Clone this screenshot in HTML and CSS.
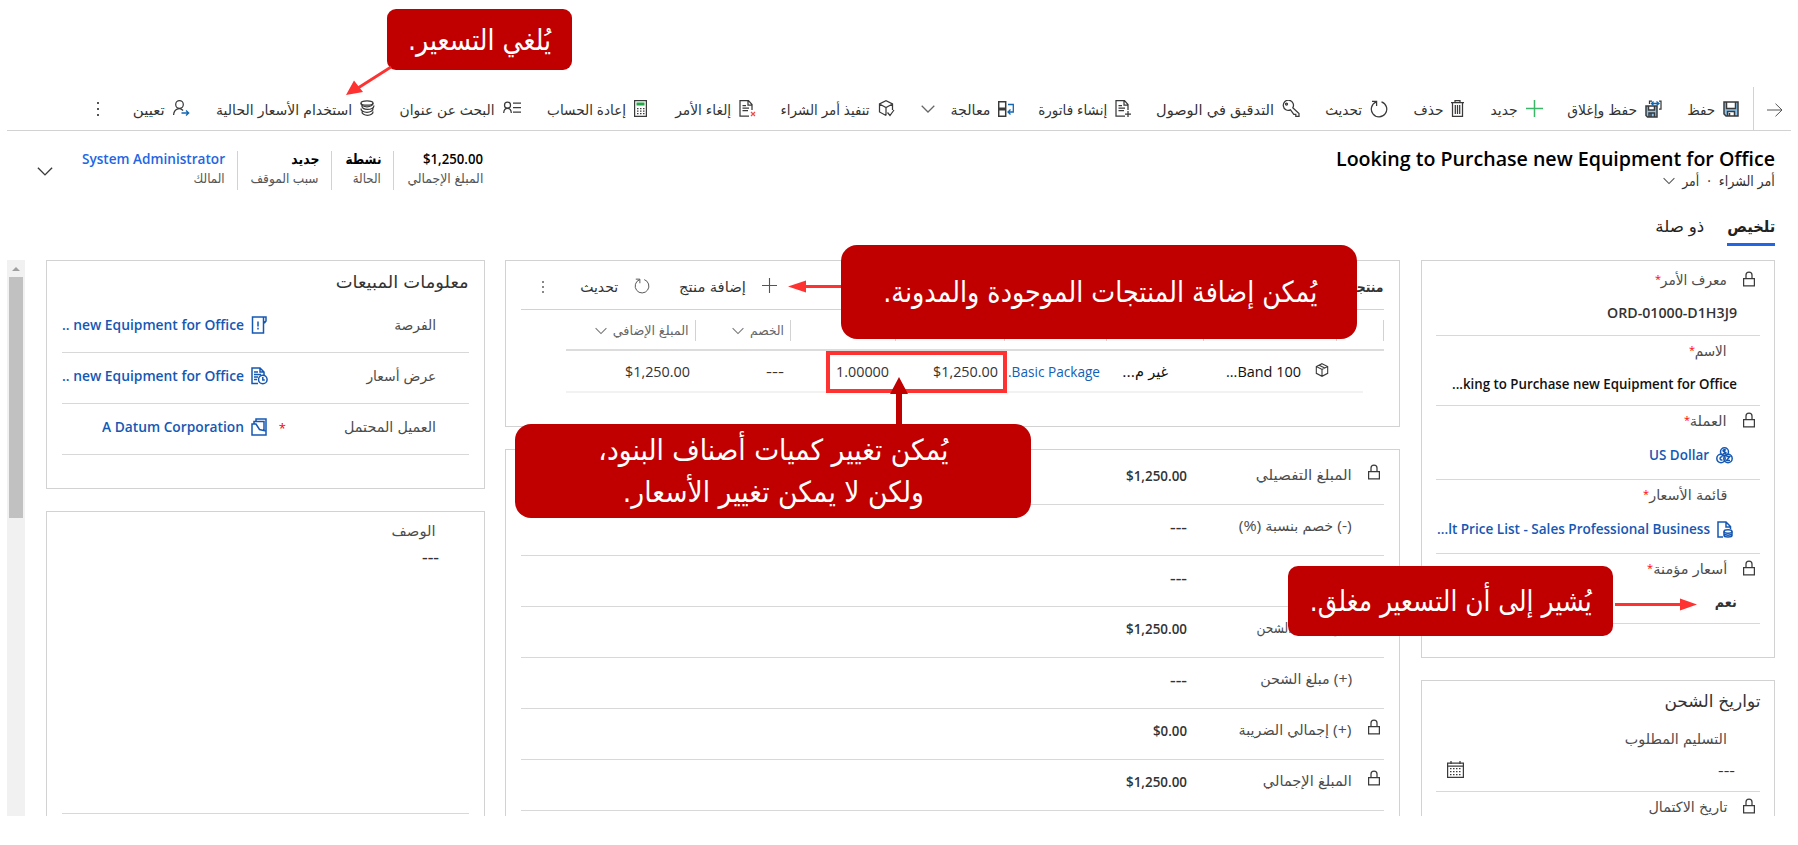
FILE: index.html
```html
<!DOCTYPE html>
<html lang="ar" dir="rtl">
<head>
<meta charset="utf-8">
<title>أمر الشراء</title>
<link rel="stylesheet" href="styles.css">
</head>
<body>
<svg class="defs" width="0" height="0">
  <symbol id="lock" viewBox="0 0 12 16"><path d="M.6 7.500h10.800v7.400H.6zM3 7.500V4a3 3 0 0 1 6 0v3.500"/></symbol>
  <symbol id="chev" viewBox="0 0 14 8"><path d="M.7.7 7 7 13.300.7"/></symbol>
  <symbol id="refresh" viewBox="0 0 18 18"><path d="M11.500 1.800A7.700 7.700 0 1 1 6.300 1.900M2 1.300h4.600v4.600"/></symbol>
  <symbol id="cube" viewBox="0 0 16 16"><path d="M8 .8 14.500 4v7.800L8 15.200l-6.500-3.400V4zM1.500 4 8 7.300 14.500 4M8 7.300v7.900M4.700 2.500l6.500 3.300"/></symbol>
</svg>
<div class="page">
  <nav class="toolbar">
    <div class="back"><svg width="16" height="14" viewBox="0 0 16 14"><path d="M0 7h15M8.500.7 15 7l-6.500 6.300"/></svg></div>
    <div class="cmds">
      <div class="cmd"><svg width="16" height="16" viewBox="0 0 16 16"><path class="sky" d="M1 1h14v14H3l-2-2z"/><path class="white" d="M3.500 1h9v6h-9zM4.500 10.500h7V15h-7z"/><path class="bold" d="M1 1h14v14H3l-2-2zM3.500 1v6.500h9V1M4.500 15v-4.500h7V15M6.500 12v3"/></svg><span class="fit" data-w="28">حفظ</span></div>
      <div class="cmd"><svg width="17" height="18" viewBox="0 0 17 18"><path class="sky" d="M1 6h11v11H2.500L1 15.500z"/><path class="white" d="M3.500 6h6v4h-6z"/><path class="bold" d="M1 6h11v11H2.500L1 15.500zM3.500 6v4h6V6M4 17v-4h5.500v4M6 13v4"/><path d="M4.500 4V1H7M14 1h2v8h-2"/><path class="blue" d="M6.500 3.500h7M11.500 1.500l2.500 2-2.500 2M8.500 1.500l-2 2 2 2"/></svg><span class="fit" data-w="70">حفظ وإغلاق</span></div>
      <div class="cmd"><svg width="17" height="17" viewBox="0 0 17 17"><path class="green" d="M8.500 0v17M0 8.500h17"/></svg><span class="fit" data-w="27">جديد</span></div>
      <div class="cmd"><svg width="13" height="17" viewBox="0 0 13 17"><path d="M0 2.600h13M4 2.600V.6h5v2M1.500 2.600v13.800h10V2.600M4.300 5v9M6.500 5v9M8.700 5v9"/></svg><span class="fit" data-w="30">حذف</span></div>
      <div class="cmd"><svg width="18" height="18"><use href="#refresh"/></svg><span class="fit" data-w="37">تحديث</span></div>
      <div class="cmd"><svg width="18" height="17" viewBox="0 0 18 17"><path d="M10.800 7.800 17 13.500v2.800h-3.200v-2h-2l-3.300-4.400A5.100 5.100 0 1 1 10.800 7.800z"/><circle cx="4.500" cy="4" r="1"/></svg><span class="fit" data-w="118">التدقيق في الوصول</span></div>
      <div class="cmd"><svg width="17" height="17" viewBox="0 0 17 17"><path d="M10 16H1V.7h8.500L13 4.500V10M9 .7V5h4M3.500 5.500H7M3.500 8h6.500M3.500 10.500H9M13 11v6M10 14h6"/></svg><span class="fit" data-w="69">إنشاء فاتورة</span></div>
      <div class="cmd"><svg width="16" height="16" viewBox="0 0 16 16"><path class="bold" d="M.7.7h7v6.600h-7zM.7 8.700h7v6.600h-7z"/><path class="blue" d="M10 3.500h5.300v7.500H10M12.500 8.500 10 11l2.500 2.500"/></svg><span class="fit" data-w="40">معالجة</span><svg class="drop" width="14" height="8"><use href="#chev"/></svg></div>
      <div class="cmd"><svg width="17" height="17" viewBox="0 0 17 17"><path d="M8 15.500 1.500 12V4L8 .8 14.500 4v6M1.500 4 8 7.500 14.500 4M8 7.500v8M9.500 12.500l2.500 3 4-5.500"/></svg><span class="fit" data-w="89">تنفيذ أمر الشراء</span></div>
      <div class="cmd"><svg width="17" height="17" viewBox="0 0 17 17"><path d="M10 16H1V.7h8.500L13 4.500V10M9 .7V5h4M3.500 5.500H7M3.500 8h6.500M3.500 10.500H9"/><path class="redline" d="m12 12 4 4m0-4-4 4"/></svg><span class="fit" data-w="56">إلغاء الأمر</span></div>
      <div class="cmd"><svg width="13" height="17" viewBox="0 0 13 17"><path d="M.6.6h11.800v15.800H.6z"/><path class="gfill" d="M2.500 2.500h8v3h-8z"/><path class="dots" d="M3 8.500h8M3 11h8M3 13.500h8"/></svg><span class="fit" data-w="79">إعادة الحساب</span></div>
      <div class="cmd"><svg class="person" width="18" height="14" viewBox="0 0 18 14"><circle cx="4.500" cy="4.200" r="3"/><path d="M.7 12c.3-6.200 7.300-6.200 7.600 0M10 2h8M10 6.500h8M10 11h8"/></svg><span class="fit" data-w="95">البحث عن عنوان</span></div>
      <div class="cmd wide"><svg width="15" height="17" viewBox="0 0 15 17"><ellipse cx="7" cy="3" rx="6" ry="2.200"/><path d="M1 3c-.5 5 12.500 5 12 0M2 5.500c-1.500 5 12 5.500 12 0M1 8.500c-.5 5 12.500 5 12 0M2 11.500c-.5 5 11.500 5 11 0"/></svg><span class="fit" data-w="136">استخدام الأسعار الحالية</span></div>
      <div class="cmd"><svg width="17" height="17" viewBox="0 0 17 17"><circle cx="6.500" cy="4.500" r="3.800"/><path d="M.6 15c.3-6 6-8 9.500-4.500"/><path class="blue" d="M8.500 13h7M13 10.500l2.700 2.500-2.700 2.500"/></svg><span class="fit" data-w="32">تعيين</span></div>
      <div class="more"><i></i><i></i><i></i></div>
    </div>
  </nav>

  <header class="head">
    <div class="ident">
      <h1 class="fit" data-w="439" dir="ltr">Looking to Purchase new Equipment for Office</h1>
      <div class="sub"><span class="fit" data-w="56">أمر الشراء</span><b>·</b><span class="fit" data-w="17">أمر</span><svg width="12" height="8"><use href="#chev"/></svg></div>
      <div class="tabs"><span class="tab on"><span class="fit" data-w="48">تلخيص</span></span><span class="tab"><span class="fit" data-w="49">ذو صلة</span></span></div>
    </div>
    <div class="stats">
      <div class="stat s1"><span class="fit strong" data-w="60" dir="ltr">$1,250.00</span><span class="fit cap" data-w="76">المبلغ الإجمالي</span></div>
      <div class="stat s2"><span class="fit strong" data-w="36">نشطة</span><span class="fit cap" data-w="28">الحالة</span></div>
      <div class="stat s3"><span class="fit strong" data-w="28">جديد</span><span class="fit cap" data-w="68">سبب الموقف</span></div>
      <div class="stat s4"><span class="fit owner" data-w="143" dir="ltr">System Administrator</span><span class="fit cap" data-w="31">المالك</span></div>
      <svg class="expand" width="16" height="9"><use href="#chev"/></svg>
    </div>
  </header>

  <main class="form">
    <div class="col right">
      <section class="card info">
        <div class="field f1"><div class="lab"><svg class="lock" width="12" height="16"><use href="#lock"/></svg><span class="fit" data-w="66">معرف الأمر</span><em>*</em></div><div class="val"><span class="fit semi" data-w="130" dir="ltr">ORD-01000-D1H3J9</span></div></div>
        <div class="field f2"><div class="lab"><span class="fit" data-w="32">الاسم</span><em>*</em></div><div class="val"><span class="fit semi dark" data-w="285" dir="ltr">...king to Purchase new Equipment for Office</span></div></div>
        <div class="field f3"><div class="lab"><svg class="lock" width="12" height="16"><use href="#lock"/></svg><span class="fit" data-w="37">العملة</span><em>*</em></div><div class="val link"><svg width="17" height="17" viewBox="0 0 17 17"><circle cx="8.500" cy="4.800" r="4"/><circle cx="5" cy="11.500" r="4.200"/><circle cx="12" cy="11.500" r="4.200"/><path d="M10 3.300c-1-1-3-.7-3 .4 0 1.400 3 .7 3 2.100 0 1.200-2.200 1.200-3 .4M8.500 2v5.600M6.500 9.800c-3-.8-3.500 3.800 0 3.200M10.300 9.500h3.500L10.500 13.500H14"/></svg><span class="fit" data-w="60" dir="ltr">US Dollar</span></div></div>
        <div class="field f4"><div class="lab"><span class="fit" data-w="78">قائمة الأسعار</span><em>*</em></div><div class="val link"><svg width="16" height="17" viewBox="0 0 16 17"><path d="M6 16H1V1h8l4.500 4.500V8M9 1v5h4.500"/><ellipse cx="11" cy="10.500" rx="4" ry="1.700"/><path d="M7 10.500v4c0 2 8 2 8 0v-4M7 13c1 1.500 7 1.500 8 0"/></svg><span class="fit" data-w="273" dir="ltr">...lt Price List - Sales Professional Business</span></div></div>
        <div class="field f5"><div class="lab"><svg class="lock" width="12" height="16"><use href="#lock"/></svg><span class="fit" data-w="74">أسعار مؤمنة</span><em>*</em></div><div class="val"><span class="fit semi" data-w="22">نعم</span></div></div>
      </section>
      <section class="card dates">
        <h2><span class="fit" data-w="96">تواريخ الشحن</span></h2>
        <div class="field d1"><div class="lab"><span class="fit" data-w="102">التسليم المطلوب</span></div><div class="val"><span class="fit" data-w="17" dir="ltr">---</span><svg class="cal" width="17" height="17" viewBox="0 0 17 17"><path d="M.6 2h15.800v14.400H.6zM.6 5h15.800M4 0v3M13 0v3"/><path class="dots" d="M3 7.500h11M3 10.500h11M3 13.500h11"/></svg></div></div>
        <div class="field"><div class="lab"><svg class="lock" width="12" height="16"><use href="#lock"/></svg><span class="fit" data-w="79">تاريخ الاكتمال</span></div></div>
      </section>
    </div>

    <div class="col mid">
      <section class="card grid">
        <div class="gbar"><span class="fit semi gt" data-w="44">منتجات</span><div class="gact"><svg width="15" height="15" viewBox="0 0 15 15"><path d="M7.500 0v15M0 7.500h15"/></svg><span class="fit" data-w="67">إضافة منتج</span><svg class="r" width="16" height="16" viewBox="0 0 16 16"><use href="#refresh" width="16" height="16"/></svg><span class="fit" data-w="38">تحديث</span><div class="more"><i></i><i></i><i></i></div></div></div>
        <div class="ghead"><div class="c0"></div><div class="c1"></div><div class="c2"></div><div class="c3"></div><div class="c4"></div><div class="c5"></div><div class="c6"><span class="fit" data-w="34">الخصم</span><svg width="12" height="8"><use href="#chev"/></svg></div><div class="c7"><span class="fit" data-w="76">المبلغ الإضافي</span><svg width="12" height="8"><use href="#chev"/></svg></div></div>
        <div class="grow"><div class="r0"><svg width="14" height="14"><use href="#cube"/></svg></div><div class="r1"><span class="fit dark" data-w="75" dir="ltr">...Band 100</span></div><div class="r2"><span class="fit dark" data-w="46">غير م...</span></div><div class="r3"><span class="fit blue-t" data-w="92" dir="ltr">.Basic Package</span></div><div class="r4"><span class="fit" data-w="65" dir="ltr">$1,250.00</span></div><div class="r5"><span class="fit" data-w="53" dir="ltr">1.00000</span></div><div class="r6"><span class="fit" data-w="18" dir="ltr">---</span></div><div class="r7"><span class="fit" data-w="65" dir="ltr">$1,250.00</span></div></div>
      </section>
      <section class="card totals">
        <div class="row first"><div class="lk"><svg class="lock" width="12" height="16"><use href="#lock"/></svg></div><div class="rl"><span class="fit" data-w="96">المبلغ التفصيلي</span></div><span class="fit semi" data-w="61" dir="ltr">$1,250.00</span></div>
        <div class="row"><div class="lk"></div><div class="rl"><span class="fit" data-w="113">(-) خصم بنسبة (%)</span></div><span class="fit semi" data-w="17" dir="ltr">---</span></div>
        <div class="row"><div class="lk"></div><div class="rl"></div><span class="fit semi" data-w="17" dir="ltr">---</span></div>
        <div class="row"><div class="lk"></div><div class="rl"><span class="fit" data-w="95">مبلغ ما قبل الشحن</span></div><span class="fit semi" data-w="61" dir="ltr">$1,250.00</span></div>
        <div class="row"><div class="lk"></div><div class="rl"><span class="fit" data-w="92">(+) مبلغ الشحن</span></div><span class="fit semi" data-w="17" dir="ltr">---</span></div>
        <div class="row"><div class="lk"><svg class="lock" width="12" height="16"><use href="#lock"/></svg></div><div class="rl"><span class="fit" data-w="113">(+) إجمالي الضريبة</span></div><span class="fit semi" data-w="34" dir="ltr">$0.00</span></div>
        <div class="row"><div class="lk"><svg class="lock" width="12" height="16"><use href="#lock"/></svg></div><div class="rl"><span class="fit" data-w="89">المبلغ الإجمالي</span></div><span class="fit semi" data-w="61" dir="ltr">$1,250.00</span></div>
      </section>
    </div>

    <div class="col left">
      <section class="card sales">
        <h2><span class="fit" data-w="133">معلومات المبيعات</span></h2>
        <div class="srow"><div class="sl"><span class="fit" data-w="42">الفرصة</span></div><div class="link"><svg width="17" height="18" viewBox="0 0 17 18"><path d="M1.500 1h11v16h-11zM12.500 1H15v4l-1.200 1.500L12.500 5M7 5.500v5M7 11.800v1.700"/></svg><span class="fit" data-w="182" dir="ltr">.. new Equipment for Office</span></div></div>
        <div class="srow"><div class="sl"><span class="fit" data-w="70">عرض أسعار</span></div><div class="link"><svg width="17" height="18" viewBox="0 0 17 18"><path d="M7 16.500H1V1h8l4 4v3M9 1v4h4M3 5h4M3 7.500h7M3 10h4M3 12.500h3"/><circle cx="11.800" cy="12.500" r="4.300"/><path d="M11.800 10v3h2"/></svg><span class="fit" data-w="182" dir="ltr">.. new Equipment for Office</span></div></div>
        <div class="srow"><div class="sl"><span class="fit" data-w="92">العميل المحتمل</span></div><em>*</em><div class="link"><svg width="17" height="18" viewBox="0 0 17 18"><path d="M1 6h4l3.500 5.500L15 13v4H1zM3 6V3.500h10v9M5 3.500V1h10v12"/></svg><span class="fit" data-w="142" dir="ltr">A Datum Corporation</span></div></div>
      </section>
      <section class="card desc"><div class="dl"><span class="fit" data-w="44">الوصف</span></div><div class="dv"><span class="fit semi" data-w="17" dir="ltr">---</span></div><hr></section>
    </div>
    <div class="scroll"><div class="up"></div><div class="thumb"></div></div>
  </main>

  <div class="box"></div>
  <div class="note n1"><span class="fit" data-w="143">يُلغي التسعير.</span></div>
  <div class="note n2"><span class="fit" data-w="434">يُمكن إضافة المنتجات الموجودة والمدونة.</span></div>
  <div class="note n3"><span class="fit" data-w="350">يُمكن تغيير كميات أصناف البنود،</span><span class="fit" data-w="301">ولكن لا يمكن تغيير الأسعار.</span></div>
  <div class="note n4"><span class="fit" data-w="282">يُشير إلى أن التسعير مغلق.</span></div>
  <svg class="arrows" width="1798" height="845"><g class="bright"><path d="M391 67 358 88M841 286.500H803M1615 604.500H1680"/><path class="tip" d="M346 95 354 80.500 363 92zM788 286.500l18-6v12zM1697 604.500l-17-6v12z"/></g><path class="deep" d="M896 424v-30h-6l9-17 9 17h-6v30z"/></svg>
</div>
<script src="fit.js"></script>
</body>
</html>
```
FILE: styles.css
```css
* { box-sizing: border-box; }
body { margin: 0; background: #fff; color: #333; font: 14px/20px "Open Sans", "DejaVu Sans Condensed", "DejaVu Sans", sans-serif; }
.defs { position: absolute; }
.page { position: relative; width: 1798px; height: 845px; overflow: hidden; padding-top: 87px; }
svg { fill: none; stroke: #3a3a3a; stroke-width: 1.25; flex: none; display: block; }
.fit { display: block; white-space: nowrap; flex: none; }
.fit > span { display: inline-block; transform-origin: right center; }
.fit[dir="ltr"] > span { transform-origin: left center; }
h1, h2 { margin: 0; font-weight: 400; }
em { color: #f00; font-style: normal; line-height: 12px; font-size: 11px; }
.semi { font-weight: 600; color: #333; }
.dark { color: #111; }
.blue-t { color: #1160b7; }
.sky { fill: #8cc4ee; stroke: none; }
.white { fill: #fff; stroke: none; }
.bold { stroke-width: 1.5; }
.blue { stroke: #1267b4; stroke-width: 1.300; }
.green { stroke: #3cb76a; stroke-width: 1.500; }
.gfill { fill: #22a447; stroke: none; }
.redline { stroke: #f04a4a; }
.dots { stroke-dasharray: 1.500 1.500; }

.toolbar { display: flex; height: 44px; margin: 0 7px; border-bottom: 1px solid #d2d2d2; }
.back { width: 38px; border-left: 1px solid #d2d2d2; display: flex; align-items: center; padding: 2px 8px 0 0; }
.back svg { stroke-width: 1; stroke: #555; }
.cmds { flex: 1; display: grid; padding: 0 14px 0 0; align-items: center; grid-template-columns: 77px 119px 79px 76px 88px 168px 118px 119px 139px 109px 126px 146px 185px 91px 10px; }
.cmd { display: flex; align-items: center; gap: 8px; }
.cmd > .fit { padding-top: 2px; }
.person { margin-top: -2px; }
.drop { margin-right: 7px; stroke: #666; }
.more { display: flex; flex-direction: column; gap: 4px; width: 2px; }
.more i { width: 2px; height: 2px; background: #555; }

.head { height: 129px; display: flex; justify-content: space-between; padding: 16px 23px 0 37px; }
.ident { display: flex; flex-direction: column; align-items: flex-start; }
h1 { font-size: 20px; font-weight: 600; line-height: 24px; color: #000; }
.sub { display: flex; align-items: center; height: 20px; gap: 8px; }
.sub svg { margin-right: -1px; stroke: #555; }
.sub b { font-weight: 400; width: 4px; }
.tabs { display: flex; gap: 23px; margin-top: 26px; }
.tab { font-size: 16px; height: 33px; padding-top: 1px; line-height: 24px; color: #222; margin-top: -4px; }
.on { border-bottom: 3px solid #2266e3; font-weight: 600; }
.stats { display: flex; padding-top: 4px; }
.stat { display: flex; flex-direction: column; align-items: flex-start; height: 39px; }
.stat .fit { line-height: 19px; }
.stat .fit:first-child { margin-top: -2px; }
.stat + .stat { border-right: 1px solid #d2d2d2; padding-right: 12px; }
.s1 { width: 89px; }
.s2 { width: 62px; }
.s3 { width: 94px; }
.s4 { width: 185px; }
.strong { font-weight: 600; color: #000; font-size: 14px; }
.cap { font-size: 13px; color: #555; margin-top: 1px; }
.owner { color: #2266e3; font-weight: 600; }
.expand { margin-top: 16px; }

.form { height: 556px; overflow: hidden; display: flex; padding: 0 23px 0 7px; }
.col { flex: none; }
.right { width: 354px; margin-left: 21px; }
.mid { width: 895px; margin-left: 20px; }
.left { width: 439px; margin-left: 21px; }
.scroll { width: 18px; background: #f1f1f1; padding: 7px 2px 0; }
.up { border: 4px solid transparent; border-top: 0; border-bottom: 4px solid #a0a0a0; width: 8px; margin: 0 auto 6px; }
.thumb { height: 241px; background: #c1c1c1; }
.card { border: 1px solid #d2d2d2; padding: 0 14px; }
.info { height: 398px; }
.dates { height: 200px; margin-top: 22px; }
.field { border-bottom: 1px solid #d8d8d8; }
.lab { display: flex; height: 29px; align-items: center; position: relative; padding-right: 33px; color: #4c4c4c; }
.lab .lock { position: absolute; right: 5px; top: 6px; }
.lab em { margin: -2px 0 0 0; }
.val { display: flex; height: 30px; align-items: center; margin-top: 4px; padding-right: 23px; }
.link { color: #1558b4; font-weight: 600; display: flex; align-items: center; gap: 7px; }
.link svg { stroke: #1558b4; stroke-width: 1.500; }
.val.link { padding-right: 27px; margin-top: 5px; }
.f1 { height: 75px; padding-top: 4px; }
.f2 { height: 70px; }
.f3, .f4 { height: 74px; }
.f5 { height: 70px; }
h2 { font-size: 17px; line-height: 24px; color: #333; }
.dates h2 { padding-top: 8px; height: 43px; }
.d1 { height: 68px; }
.d1 .val { padding-right: 25px; margin-top: 3px; }
.cal { margin: -4px auto 0 11px; }

.grid { height: 167px; padding: 0 15px; }
.gbar { height: 49px; border-bottom: 1px solid #d2d2d2; display: flex; align-items: center; justify-content: space-between; padding-top: 3px; }
.gact { display: flex; align-items: center; padding-left: 21px; gap: 16px; }
.gact svg { margin-top: -2px; stroke: #555; stroke-width: 1.100; }
.gact .more { margin-right: 20px; gap: 3px; }
.gact .more i { background: #888; }
.gact .r { margin-right: 13px; width: 16px; }
.ghead { display: grid; grid-template-columns: 47px 133px 97px 102px 109px 105px 95px 130px; height: 41px; border-bottom: 2px solid #dcdcdc; margin-left: 45px; padding-top: 10px; font-size: 12.500px; color: #666; }
.ghead div { border-right: 1px solid #d2d2d2; height: 21px; display: flex; align-items: center; gap: 6px; padding-right: 6px; }
.ghead svg { stroke: #777; }
.grow { display: grid; grid-template-columns: 62px 133px 68px 102px 109px 105px 94px 124px; height: 42px; border-bottom: 2px solid #f2f2f2; margin: 0 21px 0 45px; align-items: center; font-size: 14.500px; }
.grow .fit { padding-top: 2px; }
.r0 { padding-right: 34px; margin-top: -2px; }
.totals { height: 500px; margin-top: 22px; padding: 0 15px; }
.row { height: 51px; border-bottom: 1px solid #d8d8d8; display: flex; align-items: center; padding-bottom: 9px; }
.first { height: 55px; padding-bottom: 4px; }
.row .semi { padding-top: 2px; }
.lk { width: 32px; padding-right: 4px; margin-top: -6px; }
.rl { width: 165px; color: #4c4c4c; }

.sales { height: 229px; padding: 0 15px; }
.sales h2 { padding-top: 9px; height: 41px; }
.srow { display: flex; height: 51px; border-bottom: 1px solid #d8d8d8; align-items: center; padding: 0 33px 5px 0; position: relative; }
.sl { width: 168px; color: #4c4c4c; }
.srow em { position: absolute; right: 183px; top: 18px; font-size: 13px; }
.desc { height: 340px; margin-top: 22px; padding: 0 15px; }
.dl { padding: 9px 33px 0 0; color: #4c4c4c; }
.dv { padding: 6px 30px 0 0; }
hr { border: 0; border-top: 1px solid #d8d8d8; margin: 246px 0 0; }

.box { position: absolute; left: 826px; top: 351px; width: 181px; height: 42px; border: 4px solid #ff3232; }
.note { position: absolute; background: #c00000; color: #fff; display: flex; flex-direction: column; align-items: center; justify-content: center; font: 29px/42px "DejaVu Sans Condensed", "DejaVu Sans", sans-serif; }
.n1 { left: 387px; top: 9px; width: 185px; height: 61px; border-radius: 9px; }
.n2 { left: 841px; top: 245px; width: 516px; height: 94px; border-radius: 16px; padding-left: 2px; }
.n3 { left: 515px; top: 424px; width: 516px; height: 94px; border-radius: 16px; }
.n4 { left: 1288px; top: 566px; width: 325px; height: 70px; border-radius: 10px; }
.arrows { position: absolute; left: 0; top: 0; }
.bright { stroke: #ff3232; stroke-width: 2.800; }
.tip { fill: #ff3232; stroke: none; }
.deep { fill: #c00000; stroke: none; }
```
FILE: fit.js
```js
document.querySelectorAll('.fit').forEach(function (el) {
  var inner = document.createElement('span');
  while (el.firstChild) inner.appendChild(el.firstChild);
  el.appendChild(inner);
  var natural = inner.getBoundingClientRect().width;
  el.style.width = el.dataset.w + 'px';
  inner.style.transform = 'scaleX(' + el.dataset.w / natural + ')';
});
```
